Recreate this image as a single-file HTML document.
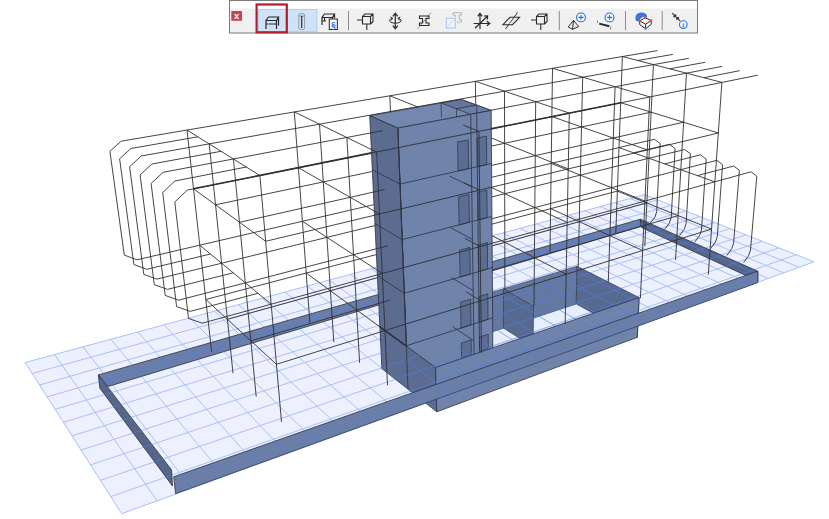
<!DOCTYPE html><html><head><meta charset="utf-8"><style>html,body{margin:0;padding:0;background:#fff;}body{width:829px;height:519px;overflow:hidden;position:relative;font-family:"Liberation Sans",sans-serif}svg{display:block}</style></head><body><svg width="829" height="519" viewBox="0 0 829 519"><polygon points="25.2,362.5 644.4,194.6 814.0,261.8 121.7,513.7" fill="#edf1ff" stroke="none" stroke-width="1" fill-opacity="1" stroke-linejoin="round"/>
<path d="M25.2,362.5 L121.7,513.7 M54.6,354.5 L157.2,500.8 M83.1,346.8 L191.5,488.3 M110.9,339.3 L224.4,476.3 M137.8,332.0 L256.3,464.8 M164.1,324.9 L287.0,453.6 M189.6,317.9 L316.7,442.8 M214.4,311.2 L345.3,432.4 M238.6,304.7 L373.1,422.3 M262.1,298.3 L399.9,412.5 M285.0,292.1 L425.9,403.0 M307.3,286.0 L451.1,393.9 M329.1,280.1 L475.5,385.0 M350.3,274.4 L499.1,376.4 M371.0,268.7 L522.1,368.0 M391.2,263.3 L544.4,359.9 M411.0,257.9 L566.0,352.1 M430.2,252.7 L587.0,344.4 M449.0,247.6 L607.4,337.0 M467.4,242.6 L627.3,329.8 M485.3,237.8 L646.6,322.7 M502.8,233.0 L665.3,315.9 M520.0,228.4 L683.6,309.3 M536.7,223.8 L701.4,302.8 M553.1,219.4 L718.8,296.5 M569.2,215.0 L735.6,290.3 M584.9,210.8 L752.1,284.3 M600.2,206.6 L768.1,278.5 M615.3,202.5 L783.8,272.8 M630.0,198.5 L799.1,267.3 M644.4,194.6 L814.0,261.8 M25.2,362.5 L644.4,194.6 M32.2,373.5 L657.7,199.9 M39.5,385.0 L671.4,205.3 M47.1,396.9 L685.5,210.9 M55.1,409.4 L699.9,216.6 M63.4,422.3 L714.8,222.5 M72.0,435.9 L730.1,228.6 M81.1,450.0 L745.9,234.9 M90.5,464.9 L762.1,241.3 M100.4,480.4 L778.9,247.9 M110.8,496.6 L796.1,254.8 M121.7,513.7 L814.0,261.8" stroke="#a9c0f5" stroke-width="1" fill="none" stroke-opacity="1"/>
<polygon points="98.3,374.9 640.4,219.2 640.4,226.3 108.3,386.4" fill="#6a7ea7" stroke="#2c3140" stroke-width="0.8" fill-opacity="1" stroke-linejoin="round"/>
<polygon points="640.4,219.2 757.8,271.2 757.8,281.0 641.5,227.5" fill="#566689" stroke="#2c3140" stroke-width="0.8" fill-opacity="1" stroke-linejoin="round"/>
<polygon points="465.3,340.8 576.2,303.9 637.3,337.3 523.3,379.7" fill="#e9eefc" stroke="none" stroke-width="1" fill-opacity="1" stroke-linejoin="round"/>
<polygon points="464.6,300.7 577.1,266.2 576.2,303.9 465.3,340.8" fill="#6578a0" stroke="#2c3140" stroke-width="0.6" fill-opacity="1" stroke-linejoin="round"/>
<polygon points="577.1,266.2 639.1,297.5 637.3,337.3 576.2,303.9" fill="#586990" stroke="#2c3140" stroke-width="0.6" fill-opacity="1" stroke-linejoin="round"/>
<polygon points="503.3,288.8 533.5,306.2 533.2,346.7 503.4,328.1" fill="#586990" stroke="#2c3140" stroke-width="0.6" fill-opacity="1" stroke-linejoin="round"/>
<clipPath id="gc"><polygon points="25.2,362.5 644.4,194.6 814.0,261.8 121.7,513.7"/></clipPath>
<clipPath id="sc1"><polygon points="98.3,374.9 640.4,219.2 640.4,226.3 108.3,386.4"/><polygon points="640.4,219.2 757.8,271.2 757.8,281.0 641.5,227.5"/><polygon points="465.3,340.8 576.2,303.9 637.3,337.3 523.3,379.7"/><polygon points="464.6,300.7 577.1,266.2 576.2,303.9 465.3,340.8"/><polygon points="577.1,266.2 639.1,297.5 637.3,337.3 576.2,303.9"/><polygon points="503.3,288.8 533.5,306.2 533.2,346.7 503.4,328.1"/></clipPath>
<g clip-path="url(#gc)"><g clip-path="url(#sc1)">
<path d="M25.2,362.5 L121.7,513.7 M54.6,354.5 L157.2,500.8 M83.1,346.8 L191.5,488.3 M110.9,339.3 L224.4,476.3 M137.8,332.0 L256.3,464.8 M164.1,324.9 L287.0,453.6 M189.6,317.9 L316.7,442.8 M214.4,311.2 L345.3,432.4 M238.6,304.7 L373.1,422.3 M262.1,298.3 L399.9,412.5 M285.0,292.1 L425.9,403.0 M307.3,286.0 L451.1,393.9 M329.1,280.1 L475.5,385.0 M350.3,274.4 L499.1,376.4 M371.0,268.7 L522.1,368.0 M391.2,263.3 L544.4,359.9 M411.0,257.9 L566.0,352.1 M430.2,252.7 L587.0,344.4 M449.0,247.6 L607.4,337.0 M467.4,242.6 L627.3,329.8 M485.3,237.8 L646.6,322.7 M502.8,233.0 L665.3,315.9 M520.0,228.4 L683.6,309.3 M536.7,223.8 L701.4,302.8 M553.1,219.4 L718.8,296.5 M569.2,215.0 L735.6,290.3 M584.9,210.8 L752.1,284.3 M600.2,206.6 L768.1,278.5 M615.3,202.5 L783.8,272.8 M630.0,198.5 L799.1,267.3 M644.4,194.6 L814.0,261.8 M25.2,362.5 L644.4,194.6 M32.2,373.5 L657.7,199.9 M39.5,385.0 L671.4,205.3 M47.1,396.9 L685.5,210.9 M55.1,409.4 L699.9,216.6 M63.4,422.3 L714.8,222.5 M72.0,435.9 L730.1,228.6 M81.1,450.0 L745.9,234.9 M90.5,464.9 L762.1,241.3 M100.4,480.4 L778.9,247.9 M110.8,496.6 L796.1,254.8 M121.7,513.7 L814.0,261.8" stroke="#4f7fe8" stroke-width="1" fill="none" stroke-opacity="0.6"/>
</g></g>
<polygon points="369.7,115.7 461.2,99.4 491.2,110.4 397.8,128.1" fill="#7387af" stroke="#2c3140" stroke-width="0.8" fill-opacity="1" stroke-linejoin="round"/>
<polygon points="441.1,103.0 461.2,99.4 476.7,105.1 456.4,108.8" fill="#64769d" stroke="#2c3140" stroke-width="0.7" fill-opacity="1" stroke-linejoin="round"/>
<polygon points="456.4,108.8 476.7,105.1 491.2,110.4 470.7,114.3" fill="#6b7ea6" stroke="#2c3140" stroke-width="0.7" fill-opacity="1" stroke-linejoin="round"/>
<path d="M441.1,103.0 L441.5,117.7 M456.4,108.8 L456.7,123.8 M476.7,105.1 L476.9,119.9 M456.7,123.8 L476.9,119.9" stroke="#2c3140" stroke-width="0.7" fill="none" stroke-opacity="1"/>
<polygon points="397.8,128.1 491.2,110.4 492.9,359.3 408.0,389.1" fill="#6f83ab" stroke="#2c3140" stroke-width="0.8" fill-opacity="1" stroke-linejoin="round"/>
<polygon points="461.0,328.1 460.6,302.2 470.6,299.1 471.0,324.9" fill="#5c6d93" stroke="#2c3140" stroke-width="0.7" fill-opacity="1" stroke-linejoin="round"/>
<polygon points="479.2,322.2 478.9,296.6 487.8,293.8 488.0,319.3" fill="#5c6d93" stroke="#2c3140" stroke-width="0.7" fill-opacity="1" stroke-linejoin="round"/>
<polygon points="460.1,277.0 459.6,250.2 469.8,247.4 470.2,274.1" fill="#5c6d93" stroke="#2c3140" stroke-width="0.7" fill-opacity="1" stroke-linejoin="round"/>
<polygon points="478.6,271.6 478.3,245.0 487.4,242.5 487.6,269.0" fill="#5c6d93" stroke="#2c3140" stroke-width="0.7" fill-opacity="1" stroke-linejoin="round"/>
<polygon points="459.1,224.9 458.6,197.0 469.0,194.5 469.4,222.2" fill="#5c6d93" stroke="#2c3140" stroke-width="0.7" fill-opacity="1" stroke-linejoin="round"/>
<polygon points="478.0,220.0 477.7,192.4 486.9,190.2 487.2,217.6" fill="#5c6d93" stroke="#2c3140" stroke-width="0.7" fill-opacity="1" stroke-linejoin="round"/>
<polygon points="458.1,171.0 457.6,142.0 468.2,139.9 468.6,168.6" fill="#5c6d93" stroke="#2c3140" stroke-width="0.7" fill-opacity="1" stroke-linejoin="round"/>
<polygon points="477.4,166.7 477.0,138.0 486.5,136.1 486.7,164.6" fill="#5c6d93" stroke="#2c3140" stroke-width="0.7" fill-opacity="1" stroke-linejoin="round"/>
<polygon points="461.6,357.3 461.3,343.1 471.2,339.8 471.4,353.9" fill="#5c6d93" stroke="#2c3140" stroke-width="0.7" fill-opacity="1" stroke-linejoin="round"/>
<polygon points="479.6,351.1 479.4,337.1 488.2,334.2 488.3,348.1" fill="#5c6d93" stroke="#2c3140" stroke-width="0.7" fill-opacity="1" stroke-linejoin="round"/>
<path d="M379.9,326.6 L406.3,345.8 L492.6,317.8 M452.7,326.7 L473.9,340.7 M377.4,275.6 L404.2,293.3 L492.3,267.6 M451.7,277.7 L473.2,290.6 M374.9,223.6 L402.2,239.6 L491.9,216.4 M450.6,227.7 L472.5,239.5 M372.3,169.8 L400.0,184.0 L491.6,163.5 M449.5,176.1 L471.7,186.7 M470.7,114.3 L474.2,365.9 M476.7,113.1 L479.7,363.9 M397.8,128.1 L408.0,389.1" stroke="#2c3140" stroke-width="0.8" fill="none" stroke-opacity="1"/>
<polygon points="369.7,115.7 397.8,128.1 406.3,346.1 435.5,367.5 436.8,411.8 381.9,368.6" fill="#5c6c91" stroke="#2c3140" stroke-width="0.8" fill-opacity="1" stroke-linejoin="round"/>
<path d="M379.9,326.6 L406.3,345.8 M377.4,275.6 L404.2,293.3 M374.9,223.6 L402.2,239.6 M372.3,169.8 L400.0,184.0 M397.8,128.1 L408.0,389.1" stroke="#2c3140" stroke-width="0.8" fill="none" stroke-opacity="1"/>
<path d="M379.9,326.8 L406.3,346.1" stroke="#2c3140" stroke-width="1.6" fill="none" stroke-opacity="1"/>
<polygon points="435.5,367.5 639.1,297.5 637.3,337.3 436.8,411.8" fill="#6f83ab" stroke="#2c3140" stroke-width="0.8" fill-opacity="1" stroke-linejoin="round"/>
<polygon points="98.3,374.9 171.6,469.9 172.5,486.0 99.9,388.2" fill="#566689" stroke="#2c3140" stroke-width="0.8" fill-opacity="1" stroke-linejoin="round"/>
<polygon points="173.7,476.8 757.8,271.2 757.8,282.6 175.6,493.7" fill="#6a7ea7" stroke="#2c3140" stroke-width="0.8" fill-opacity="1" stroke-linejoin="round"/>
<clipPath id="sc"><polygon points="380.7,343.6 407.0,363.4 492.7,334.6 492.9,359.3 408.0,389.1 381.9,368.6"/><polygon points="406.3,346.1 435.5,367.5 436.8,411.8 408.0,389.1"/><polygon points="435.5,367.5 639.1,297.5 637.3,337.3 436.8,411.8"/><polygon points="98.3,374.9 171.6,469.9 172.5,486.0 99.9,388.2"/><polygon points="173.7,476.8 757.8,271.2 757.8,282.6 175.6,493.7"/></clipPath>
<g clip-path="url(#gc)"><g clip-path="url(#sc)">
<path d="M25.2,362.5 L121.7,513.7 M54.6,354.5 L157.2,500.8 M83.1,346.8 L191.5,488.3 M110.9,339.3 L224.4,476.3 M137.8,332.0 L256.3,464.8 M164.1,324.9 L287.0,453.6 M189.6,317.9 L316.7,442.8 M214.4,311.2 L345.3,432.4 M238.6,304.7 L373.1,422.3 M262.1,298.3 L399.9,412.5 M285.0,292.1 L425.9,403.0 M307.3,286.0 L451.1,393.9 M329.1,280.1 L475.5,385.0 M350.3,274.4 L499.1,376.4 M371.0,268.7 L522.1,368.0 M391.2,263.3 L544.4,359.9 M411.0,257.9 L566.0,352.1 M430.2,252.7 L587.0,344.4 M449.0,247.6 L607.4,337.0 M467.4,242.6 L627.3,329.8 M485.3,237.8 L646.6,322.7 M502.8,233.0 L665.3,315.9 M520.0,228.4 L683.6,309.3 M536.7,223.8 L701.4,302.8 M553.1,219.4 L718.8,296.5 M569.2,215.0 L735.6,290.3 M584.9,210.8 L752.1,284.3 M600.2,206.6 L768.1,278.5 M615.3,202.5 L783.8,272.8 M630.0,198.5 L799.1,267.3 M644.4,194.6 L814.0,261.8 M25.2,362.5 L644.4,194.6 M32.2,373.5 L657.7,199.9 M39.5,385.0 L671.4,205.3 M47.1,396.9 L685.5,210.9 M55.1,409.4 L699.9,216.6 M63.4,422.3 L714.8,222.5 M72.0,435.9 L730.1,228.6 M81.1,450.0 L745.9,234.9 M90.5,464.9 L762.1,241.3 M100.4,480.4 L778.9,247.9 M110.8,496.6 L796.1,254.8 M121.7,513.7 L814.0,261.8" stroke="#4f7fe8" stroke-width="1" fill="none" stroke-opacity="0.6"/>
</g></g>
<path d="M657.5,50.6 L121.1,141.2 M121.1,141.2 L109.9,151.3 M109.9,151.3 L124.3,255.1 M124.3,255.1 L137.0,259.8 M137.0,259.8 L373.6,204.7 M492.0,177.2 L654.4,139.3 M654.4,139.3 L660.2,143.5 M660.2,143.5 L656.7,211.7 M656.7,211.7 L655.0,217.0 M655.0,217.0 L650.3,223.2 M197.9,136.8 L130.9,148.5 M130.9,148.5 L119.6,158.8 M119.6,158.8 L133.9,264.5 M133.9,264.5 L146.7,269.3 M146.7,269.3 L210.5,254.0 M672.9,54.4 L637.6,60.5 M633.7,152.8 L669.3,144.3 M669.3,144.3 L675.1,148.5 M675.1,148.5 L671.2,217.6 M671.2,217.6 L669.4,223.0 M669.4,223.0 L664.7,229.3 M688.8,58.3 L141.2,156.0 M141.2,156.0 L129.6,166.7 M129.6,166.7 L143.8,274.4 M143.8,274.4 L156.9,279.1 M156.9,279.1 L375.0,225.6 M491.8,196.9 L684.6,149.5 M684.6,149.5 L690.4,153.7 M690.4,153.7 L686.1,223.7 M686.1,223.7 L684.3,229.2 M684.3,229.2 L679.5,235.5 M221.0,151.3 L151.9,164.0 M151.9,164.0 L140.1,174.9 M140.1,174.9 L154.3,284.7 M154.3,284.7 L167.5,289.4 M167.5,289.4 L233.2,272.8 M705.2,62.3 L669.6,68.8 M664.6,163.9 L700.5,154.8 M700.5,154.8 L706.2,159.1 M706.2,159.1 L701.5,230.0 M701.5,230.0 L699.6,235.5 M699.6,235.5 L694.8,242.0 M722.2,66.4 L490.6,110.3 M382.5,130.7 L163.1,172.3 M163.1,172.3 L151.1,183.5 M151.1,183.5 L165.2,295.4 M165.2,295.4 L178.6,300.2 M178.6,300.2 L387.8,245.8 M491.7,218.8 L716.8,160.3 M716.8,160.3 L722.6,164.6 M722.6,164.6 L717.3,236.4 M717.3,236.4 L715.4,242.1 M715.4,242.1 L710.5,248.7 M246.4,167.0 L174.9,181.0 M174.9,181.0 L162.7,192.5 M162.7,192.5 L176.6,306.6 M176.6,306.6 L190.2,311.4 M190.2,311.4 L258.0,293.3 M739.7,70.7 L703.9,77.7 M697.5,175.6 L733.7,166.0 M733.7,166.0 L739.4,170.3 M739.4,170.3 L733.6,243.1 M733.6,243.1 L731.7,248.8 M731.7,248.8 L726.8,255.5 M757.8,75.2 L187.3,190.1 M187.3,190.1 L174.8,202.0 M174.8,202.0 L188.5,318.4 M188.5,318.4 L202.3,323.2 M202.3,323.2 L751.1,171.8 M751.1,171.8 L756.8,176.2 M756.8,176.2 L750.5,250.0 M750.5,250.0 L748.5,255.8 M748.5,255.8 L743.5,262.6 M211.6,351.7 L187.0,130.1 M233.0,373.2 L209.2,143.9 M256.2,396.5 L233.4,159.0 M281.5,421.9 L259.9,175.5 M205.8,299.5 L276.4,364.3 M199.8,245.2 L271.2,304.2 M193.5,188.8 L265.7,241.3 M187.0,130.1 L259.9,175.5 M309.9,322.9 L294.3,111.9 M333.8,342.1 L319.5,124.2 M359.6,362.9 L346.9,137.5 M387.5,385.3 L376.6,152.0 M306.2,273.0 L384.9,330.6 M302.4,221.3 L382.3,273.5 M298.4,167.7 L379.5,214.1 M294.3,111.9 L376.6,152.0 M390.5,111.9 L389.8,95.8 M417.3,107.7 L417.3,106.7 M481.4,353.0 L478.9,131.4 M466.0,291.8 L480.8,300.8 M465.1,238.4 L480.2,246.5 M464.2,182.8 L479.6,190.1 M389.8,95.8 L418.2,107.1 M463.3,125.1 L478.9,131.4 M475.7,104.3 L475.4,81.3 M504.9,289.4 L504.5,91.2 M534.0,306.1 L535.7,101.7 M565.2,324.1 L569.3,113.1 M492.3,235.8 L566.2,274.2 M492.0,187.8 L567.2,222.5 M491.6,138.1 L568.2,168.9 M475.4,81.3 L569.3,113.1 M550.0,252.5 L552.5,68.3 M578.2,266.8 L582.7,77.2 M608.3,282.0 L615.1,86.7 M640.4,298.2 L649.8,96.9 M550.6,208.6 L642.6,250.5 M551.2,163.4 L644.9,201.1 M551.9,116.6 L647.3,149.9 M552.5,68.3 L649.8,96.9 M615.8,233.3 L622.4,56.5 M644.8,246.3 L653.4,64.6 M675.5,260.1 L686.5,73.2 M708.3,274.8 L721.9,82.4 M617.4,191.1 L711.5,229.1 M619.0,147.6 L714.8,181.8 M620.7,102.7 L718.3,133.0 M622.4,56.5 L721.9,82.4 M205.8,299.5 L376.6,254.5 M491.6,224.2 L617.4,191.1 M227.4,319.3 L377.0,277.8 M492.5,245.8 L646.8,202.9 M215.5,204.8 L371.8,171.6 M491.9,146.0 L651.1,112.2 M250.9,340.9 L389.7,300.2 M492.5,270.0 L678.1,215.6 M239.5,222.3 L384.8,189.5 M491.8,165.4 L683.6,122.2 M276.4,364.3 L711.5,229.1 M265.7,241.3 L718.3,133.0" stroke="#303030" stroke-width="0.9" fill="none"/>
<path d="M193.5,188.8 L371.7,152.9 M490.9,128.9 L620.7,102.7" stroke="#303030" stroke-width="1.6" fill="none"/>
<g id="toolbar">
<rect x="229.5" y="0.5" width="468" height="32.5" fill="#f0f0f0" stroke="#7a7a7a" stroke-width="1"/>
<rect x="230" y="1" width="467" height="7.5" fill="#ffffff"/>
<rect x="231.3" y="11" width="10.7" height="9.8" fill="#c8434b"/>
<text x="236.7" y="19.3" font-family="Liberation Sans, sans-serif" font-size="9.5" font-weight="bold" fill="#fff" text-anchor="middle">x</text>
<rect x="258.5" y="9.5" width="58.5" height="22" fill="#cfe3f8" stroke="#a9cbf0" stroke-width="0.8"/>
<rect x="256.6" y="4.5" width="30.2" height="27.8" fill="none" stroke="#b01e2b" stroke-width="2.2"/>
<path d="M266 29 V20.5 L268.5 17 H278.5 L276.5 20.5 H266 M276.5 20.5 V29 M278.5 17 V25.5 M268.5 24 H276.5 M266 24 H268" stroke="#2b2b2b" stroke-width="1.2" fill="none"/>
<path d="M298.8 15 V28 A2.9 1.6 0 0 0 304.6 28 V15 A2.9 1.6 0 0 0 298.8 15 A2.9 1.6 0 0 0 304.6 15" stroke="#8c8c8c" stroke-width="0.8" fill="none"/>
<path d="M301.7 15.5 V28" stroke="#2b2b2b" stroke-width="1.2" fill="none"/>
<path d="M322 25 V17.5 L324.5 14 H334.5 L332.5 17.5 H322 M332.5 17.5 V19 M334.5 14 V18 M324.5 20.5 V17.5 M322 21 H326" stroke="#2b2b2b" stroke-width="1.2" fill="none"/>
<rect x="329.3" y="19" width="8" height="10.5" fill="#fff" stroke="#222" stroke-width="1"/>
<text x="333.3" y="27.6" font-family="Liberation Sans, sans-serif" font-size="8.5" font-weight="bold" fill="#1a6fe0" text-anchor="middle">§</text>
<path d="M348.5 11 V30.3" stroke="#8a8a8a" stroke-width="1"/>
<path d="M559.3 11 V30.3" stroke="#8a8a8a" stroke-width="1"/>
<path d="M625.5 11 V30.3" stroke="#8a8a8a" stroke-width="1"/>
<path d="M662.2 11 V30.3" stroke="#8a8a8a" stroke-width="1"/>
<path d="M357 20 H362.5 M362.5 16.5 H370.5 V24 H362.5 Z M362.5 16.5 L365 14 H373 V21.5 L370.5 24 M370.5 16.5 L373 14 M366.8 24 V30" stroke="#2b2b2b" stroke-width="1.1" fill="none"/>
<path d="M531 20 H536.5 M536.5 16.5 H544.5 V24 H536.5 Z M536.5 16.5 L539 14 H547 V21.5 L544.5 24 M544.5 16.5 L547 14 M540.8 24 V30" stroke="#2b2b2b" stroke-width="1.1" fill="none"/>
<path d="M395.3 13.5 V28.5 M392.8 16.3 L395.3 13.3 L397.8 16.3 M392.8 25.7 L395.3 28.7 L397.8 25.7" stroke="#2b2b2b" stroke-width="1.2" fill="none"/>
<path d="M392.5 18.3 A5.8 2.6 0 1 0 398.2 18.3 M390.5 17 L392.6 18.3 L391.2 20.3 M400.2 17 L398.1 18.3 L399.5 20.3" stroke="#2b2b2b" stroke-width="1" fill="none"/>
<path d="M417.5 29 L431 12.5" stroke="#9a9a9a" stroke-width="1"/>
<path d="M419.5 16 H429 V18.5 H426 V23 H429 V25.5 H419.5 V23 H422.5 V18.5 H419.5 Z" stroke="#2b2b2b" stroke-width="1.1" fill="none"/>
<rect x="446.3" y="18.3" width="9" height="9.7" fill="#eef4fd" stroke="#a9c8f5" stroke-width="1.1"/>
<path d="M446.5 28 L455 18.5" stroke="#c8c8c8" stroke-width="0.8"/>
<path d="M453 12.7 H461.5 V15 H459.3 V19.7 H461.5 V22 H457 M453 12.7 V15 H455.3 V17" stroke="#b5b5b5" stroke-width="1" fill="none"/>
<path d="M480 29 V13.5 M477.8 16.3 L480 13.3 L482.2 16.3 M473.6 23.5 H489.5 M486.8 21.3 L489.8 23.5 L486.8 25.7 M475 28.2 L487.3 16.2 M484 16 L487.6 15.9 L487.4 19.5" stroke="#2b2b2b" stroke-width="1.2" fill="none"/>
<path d="M503 24.7 L510 17.3 H519.5 L512.5 24.7 Z" stroke="#2b2b2b" stroke-width="1.1" fill="none"/>
<path d="M505.5 29 L517.5 12.5" stroke="#2b2b2b" stroke-width="1"/>
<path d="M509 24 L514.5 17.7" stroke="#9a9a9a" stroke-width="0.8"/>
<path d="M568.2 27 L573.5 20.3 L578.6 26.5 L572.5 29.3 Z M573.5 20.3 L572.5 29.3" stroke="#2b2b2b" stroke-width="1" fill="none"/>
<circle cx="581" cy="17.4" r="4.4" fill="#fff" stroke="#1f6fe8" stroke-width="1.1"/>
<path d="M578.4 17.4 H583.6 M581 14.8 V20" stroke="#1f6fe8" stroke-width="1.1"/>
<circle cx="609.5" cy="17.4" r="4.4" fill="#fff" stroke="#1f6fe8" stroke-width="1.1"/>
<path d="M606.9 17.4 H612.1 M609.5 14.8 V20" stroke="#1f6fe8" stroke-width="1.1"/>
<path d="M599.2 23.6 L609.3 26.3" stroke="#2b2b2b" stroke-width="2"/>
<path d="M597.5 20.5 V23 M610.7 26.5 V29.5" stroke="#666" stroke-width="0.8"/>
<path d="M636 21 C634 15 638 12.2 642 12.6 C645.5 12.8 647.5 15 647 17.5 C644 15.5 640 17 639.5 21.5 Z" fill="#3d74e0"/>
<path d="M639.7 21 L645.3 17.8 L651.2 20.6 L645.6 24.2 Z M639.7 21 V24.5 L645.6 28.7 L651.2 24.3 V20.6 M645.6 24.2 V28.7" stroke="#2b2b2b" stroke-width="1" fill="#fff" fill-opacity="0.6"/>
<circle cx="645.3" cy="17.8" r="1.3" fill="#e9542a"/>
<circle cx="651.2" cy="20.6" r="1.3" fill="#e9542a"/>
<circle cx="639.7" cy="21" r="1.3" fill="#e9542a"/>
<circle cx="645.6" cy="28.7" r="1.2" fill="#4b86e8"/>
<path d="M672.2 13.1 L675.6 16.5 M673.4 16.6 H675.7 V14.3 M680 20.8 L676.9 17.7 M676.8 19.9 V17.6 H679.1" stroke="#2b2b2b" stroke-width="1.1" fill="none"/>
<circle cx="683.3" cy="24.6" r="3.8" fill="#fff" stroke="#1f6fe8" stroke-width="1.1"/>
<text x="683.3" y="27.2" font-family="Liberation Serif, serif" font-size="7" font-weight="bold" fill="#1f6fe8" text-anchor="middle">i</text>
</g></svg></body></html>
